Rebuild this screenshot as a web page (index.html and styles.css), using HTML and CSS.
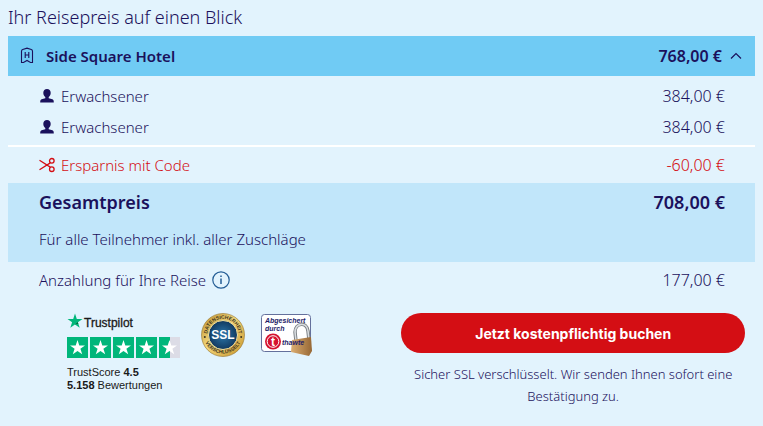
FILE: index.html
```html
<!DOCTYPE html>
<html lang="de">
<head>
  <meta charset="UTF-8" />
  <meta name="viewport" content="width=device-width, initial-scale=1.0"/>
  <title>Ihr Reisepreis</title>
  <link rel="stylesheet" href="styles.css">
</head>
<body>

  <main class="price-overview">
    <h2>Ihr Reisepreis auf einen Blick</h2>

    <button type="button" class="hotel-bar" aria-expanded="true">
      <svg class="hotel-icon" width="14" height="18" viewBox="0 0 14 18" fill="none" stroke="currentColor" stroke-width="1.1">
        <path d="M1.500 15.500V4.200Q1.500 3 2.700 2.600L7 1.200l4.300 1.400Q12.500 3 12.500 4.200v11.300H10.500L7 13.500 3.500 15.500z"/>
        <path d="M5.200 5v6M8.800 5v6M5.200 8h3.600"/>
      </svg>
      <span class="hotel-name">Side Square Hotel</span>
      <span class="hotel-price">768,00 €</span>
      <svg width="12" height="8" viewBox="0 0 12 8" fill="none" stroke="currentColor" stroke-width="1.2"><path d="M1 6.500l5-5 5 5"/></svg>
    </button>

    <div class="travellers">
      <div class="row">
        <svg class="row-icon" width="16" height="16" viewBox="0 0 16 16" fill="currentColor"><path d="M8 1C5.800 1 4.300 2.500 4.300 4.700c0 2 .8 3.500 2 4.300v1.200L2.600 11.200C1.500 11.600 1.200 12.500 1.200 14.500h13.600c0-2-.3-2.900-1.400-3.300L9.700 10.200V9c1.200-.8 2-2.300 2-4.300C11.700 2.500 10.200 1 8 1z"/></svg>
        <span>Erwachsener</span>
        <span class="amount">384,00 €</span>
      </div>
      <div class="row">
        <svg class="row-icon" width="16" height="16" viewBox="0 0 16 16" fill="currentColor"><path d="M8 1C5.800 1 4.300 2.500 4.300 4.700c0 2 .8 3.500 2 4.300v1.200L2.600 11.200C1.500 11.600 1.200 12.500 1.200 14.500h13.600c0-2-.3-2.900-1.400-3.300L9.700 10.200V9c1.200-.8 2-2.300 2-4.300C11.700 2.500 10.200 1 8 1z"/></svg>
        <span>Erwachsener</span>
        <span class="amount">384,00 €</span>
      </div>
    </div>

    <div class="row discount">
      <svg class="row-icon" width="16" height="16" viewBox="0 0 16 16" fill="none" stroke="currentColor" stroke-width="1.300">
        <path d="M.5 3.200l10.800 6.900M.5 12.800l10.800-6.900"/>
        <circle cx="12.800" cy="3.800" r="2.300"/>
        <circle cx="12.800" cy="12.200" r="2.300"/>
      </svg>
      <span>Ersparnis mit Code</span>
      <span class="amount">-60,00 €</span>
    </div>

    <div class="total">
      <div class="total-line">
        <span>Gesamtpreis</span>
        <span class="total-amount">708,00 €</span>
      </div>
      <p>Für alle Teilnehmer inkl. aller Zuschläge</p>
    </div>

    <div class="row deposit">
      <span>Anzahlung für Ihre Reise</span>
      <button type="button" class="info" aria-label="Info">
        <svg width="18" height="18" viewBox="0 0 18 18" fill="none" stroke="currentColor"><circle cx="9" cy="9" r="8.200" stroke-width="1.200"/><path d="M9 7.500v5.500M9 4.500v1.500" stroke-width="1.500"/></svg>
      </button>
      <span class="amount">177,00 €</span>
    </div>

    <div class="checkout">
      <div class="seals">
        <div class="trustpilot">
          <div class="tp-brand">
            <svg width="16" height="16" viewBox="0 0 16 16"><path fill="#00b67a" d="M8 .5l1.800 5.400h5.700l-4.600 3.400 1.800 5.500L8 11.400l-4.700 3.400 1.800-5.500L.5 5.900h5.700z"/><path fill="#005128" d="M11.300 10.500l-.4-1.200L8 11.400z"/></svg>
            <span>Trustpilot</span>
          </div>
          <svg class="tp-stars" width="113" height="21" viewBox="0 0 113 21" role="img" aria-label="4.5">
            <defs>
              <path id="star" fill="#fff" d="M10.500 3l1.800 5.500h5.700l-4.600 3.300 1.800 5.500-4.700-3.400-4.700 3.400 1.800-5.500L3 8.500h5.700z"/>
            </defs>
            <path fill="#00b67a" d="M0 0h21v21H0zM23 0h21v21H23zM46 0h21v21H46zM69 0h21v21H69zM92 0h11v21H92z"/>
            <path fill="#dcdce6" d="M103 0h10v21h-10z"/>
            <use href="#star"/>
            <use href="#star" x="23"/>
            <use href="#star" x="46"/>
            <use href="#star" x="69"/>
            <use href="#star" x="92"/>
          </svg>
          <div class="tp-score">TrustScore <b>4.5</b><br><b>5.158</b> Bewertungen</div>
        </div>

        <svg class="ssl-seal" width="44" height="44" viewBox="0 0 44 44">
          <defs>
            <linearGradient id="gold" x1="0" y1="0" x2="1" y2="1">
              <stop offset="0" stop-color="#b98d2b"/>
              <stop offset=".45" stop-color="#f3d77c"/>
              <stop offset="1" stop-color="#c69228"/>
            </linearGradient>
            <radialGradient id="blue">
              <stop offset="0" stop-color="#2c78ad"/>
              <stop offset="1" stop-color="#12395f"/>
            </radialGradient>
            <path id="arcTop" d="M6.500 24a15.700 15.700 0 1 1 31 0"/>
            <path id="arcBottom" d="M2.500 21a19.500 19.500 0 0 0 39 0"/>
          </defs>
          <circle cx="22" cy="22" r="21.500" fill="url(#gold)" stroke="#94722b" stroke-width=".6"/>
          <circle cx="22" cy="22" r="14.500" fill="url(#blue)" stroke="#f4df9c"/>
          <text class="seal-ring"><textPath href="#arcTop" startOffset="50%">DATENSICHERHEIT</textPath></text>
          <text class="seal-ring"><textPath href="#arcBottom" startOffset="50%">VERSCHLÜSSELT</textPath></text>
          <circle cx="3.800" cy="24" r="1" fill="#3c3420"/>
          <circle cx="40.200" cy="24" r="1" fill="#3c3420"/>
          <text class="seal-ssl" x="22" y="26">SSL</text>
        </svg>

        <svg class="thawte-seal" width="52" height="43" viewBox="0 0 52 43">
          <defs>
            <linearGradient id="brass" x1="0" y1="0" x2="1" y2="0">
              <stop offset="0" stop-color="#dcae72"/>
              <stop offset="1" stop-color="#966735"/>
            </linearGradient>
          </defs>
          <rect x=".5" y=".5" width="49" height="37" rx="3" fill="#fff" stroke="#64709c"/>
          <text class="thawte-text" x="4" y="9">Abgesichert</text>
          <text class="thawte-text" x="4" y="17">durch</text>
          <circle cx="12" cy="27.500" r="8" fill="#d5112f"/>
          <circle cx="12" cy="27.500" r="5.800" fill="none" stroke="#fff"/>
          <text class="thawte-t" x="10" y="32">t</text>
          <path d="M35 27l-1-9c0-9 12-11 13-1l1 9" fill="none" stroke="#777c80" stroke-width="3.400"/>
          <path d="M35 27l-1-9c0-9 12-11 13-1l1 9" fill="none" stroke="#d9dde0" stroke-width="1.600"/>
          <path d="M31 26l19-3 1 14-3 5-18-4z" fill="url(#brass)"/>
          <text class="thawte-text" x="21" y="31">thawte</text>
        </svg>
      </div>

      <div class="booking">
        <button type="button" class="book-btn">Jetzt kostenpflichtig buchen</button>
        <p>Sicher SSL verschlüsselt. Wir senden Ihnen sofort eine Bestätigung zu.</p>
      </div>
    </div>
  </main>

</body>
</html>
```
FILE: styles.css
```css
body {
  margin: 0;
  font-family: 'Noto Sans', 'Open Sans', sans-serif;
  font-size: 15px;
  font-weight: 300;
  line-height: 20px;
  background: #e2f3fd;
  color: #1b115c;
}

svg {
  display: block;
  flex: none;
}

button {
  font-family: inherit;
  color: inherit;
  border: none;
  cursor: pointer;
}

.price-overview {
  padding: 0 8px;
}

h2 {
  margin: 0;
  padding: 5px 0 7px;
  font-size: 18px;
  font-weight: 300;
  line-height: 24px;
}

.hotel-bar {
  display: flex;
  align-items: center;
  width: 100%;
  height: 40px;
  padding: 0 13px 0 12px;
  background: #70cbf4;
  font-size: 15px;
  font-weight: 600;
}

.hotel-name {
  margin-left: 12px;
}

.hotel-price {
  margin-left: auto;
  margin-right: 8px;
  font-size: 16px;
}

.travellers {
  padding: 4px 0 3px;
  border-bottom: 2px solid #fff;
}

.row {
  display: flex;
  align-items: center;
  height: 31px;
  padding: 0 30px 0 31px;
}

.row-icon {
  margin-right: 6px;
}

.amount {
  margin-left: auto;
  font-size: 16px;
}

.discount {
  height: 36px;
  color: #d40e14;
}

.total {
  padding: 7px 30px 13px 31px;
  background: #c1e6fa;
}

.total-line {
  display: flex;
  font-size: 18px;
  font-weight: 600;
  line-height: 24px;
}

.total-amount {
  margin-left: auto;
}

.total p {
  margin: 15px 0 0;
}

.deposit {
  height: 36px;
}

.info {
  margin-left: 6px;
  padding: 0;
  background: none;
  color: #245d95;
}

.checkout {
  display: flex;
  align-items: flex-start;
  margin-top: 15px;
}

.seals {
  flex: 1;
  display: flex;
  align-items: flex-start;
  padding-left: 59px;
}

.trustpilot {
  font-family: 'Liberation Sans', Arial, sans-serif;
  color: #191919;
}

.tp-brand {
  display: flex;
  align-items: center;
  height: 16px;
  font-size: 12px;
}

.tp-brand span {
  -webkit-text-stroke: 0.3px;
  margin: 3px 0 0 1px;
}

.tp-stars {
  margin: 8px 0;
}

.tp-score {
  font-size: 11px;
  font-weight: 400;
  line-height: 13px;
}

.ssl-seal {
  margin-left: 21px;
}

.thawte-seal {
  margin-left: 16px;
  margin-top: 1px;
}

.seal-ring,
.seal-ssl,
.thawte-text,
.thawte-t {
  font-family: 'Liberation Sans', Arial, sans-serif;
  font-weight: bold;
}

.seal-ring {
  font-size: 5px;
  fill: #3c3420;
  text-anchor: middle;
}

.seal-ssl {
  font-size: 12px;
  fill: #fff;
  text-anchor: middle;
}

.thawte-text {
  font-size: 7px;
  font-style: italic;
  fill: #241c68;
}

.thawte-t {
  font-size: 12px;
  fill: #fff;
}

.booking {
  width: 46%;
  margin-right: 10px;
  text-align: center;
}

.book-btn {
  width: 100%;
  height: 40px;
  border-radius: 20px;
  background: #d40e14;
  color: #fff;
  font-family: Inter, sans-serif;
  font-size: 14px;
  font-weight: 700;
}

.booking p {
  margin: 10px 0 0;
  font-size: 13px;
  line-height: 22px;
}
```
